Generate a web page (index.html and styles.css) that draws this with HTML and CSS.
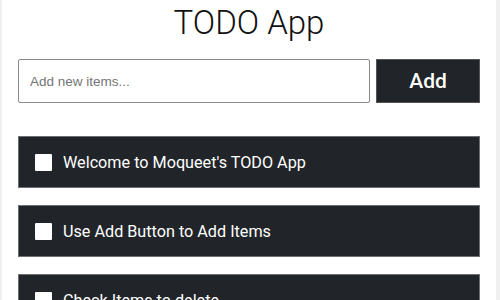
FILE: index.html
```html
<!DOCTYPE html>
<html lang="en">
<head>
    <meta charset="UTF-8">
    <meta name="viewport" content="width=device-width, initial-scale=1.0">
    <title>TODO App</title>
    <link rel="stylesheet" href="styles.css">
</head>
<body>

<div class="container">
    <h1>TODO App</h1>
    <div class="add-row">
        <input type="text" id="newItem" placeholder="Add new items...">
        <button class="add-btn">Add</button>
    </div>
    <ul class="todo-list">
        <li class="todo-item"><span class="box"></span>Welcome to Moqueet's TODO App</li>
        <li class="todo-item"><span class="box"></span>Use Add Button to Add Items</li>
        <li class="todo-item"><span class="box"></span>Check Items to delete</li>
    </ul>
</div>

</body>
</html>
```

FILE: styles.css
```css
body {
    font-family: Roboto, "Liberation Sans", sans-serif;
    margin: 0;
    background-color: #f0f0f0;
    overflow: hidden;
}
.container {
    width: 462px;
    margin-left: 2px;
    padding: 0 16px;
    min-height: 300px;
    background-color: #fff;
}
h1 {
    margin: 0;
    padding-top: 3px;
    height: 56px;
    font-size: 33px;
    font-weight: 300;
    text-align: center;
    color: #111;
    line-height: 40px;
}
.add-row {
    display: flex;
    gap: 6px;
}
.add-row input {
    width: 352px;
    height: 44px;
    box-sizing: border-box;
    border: 1px solid #8a8a8a;
    border-radius: 2px;
    padding: 0 11px;
    font-family: "Liberation Sans", Arial, sans-serif;
    font-size: 13.5px;
}
.add-row input::placeholder {
    color: #757575;
}
.add-btn {
    width: 104px;
    height: 44px;
    background-color: #212529;
    color: #fff;
    border: 1px solid #555;
    font-family: Roboto, sans-serif;
    font-size: 21px;
    font-weight: 500;
    cursor: pointer;
}
.todo-list {
    list-style: none;
    margin: 33px 0 0;
    padding: 0;
    display: flex;
    flex-direction: column;
    gap: 17px;
}
.todo-item {
    height: 52px;
    box-sizing: border-box;
    background-color: #212529;
    border: 1px solid #6c6f73;
    display: flex;
    align-items: center;
    padding-left: 16px;
    color: #fff;
    font-size: 16.2px;
}
.box {
    width: 17px;
    height: 17px;
    background-color: #fff;
    border-radius: 1px;
    margin-right: 11px;
}
```
